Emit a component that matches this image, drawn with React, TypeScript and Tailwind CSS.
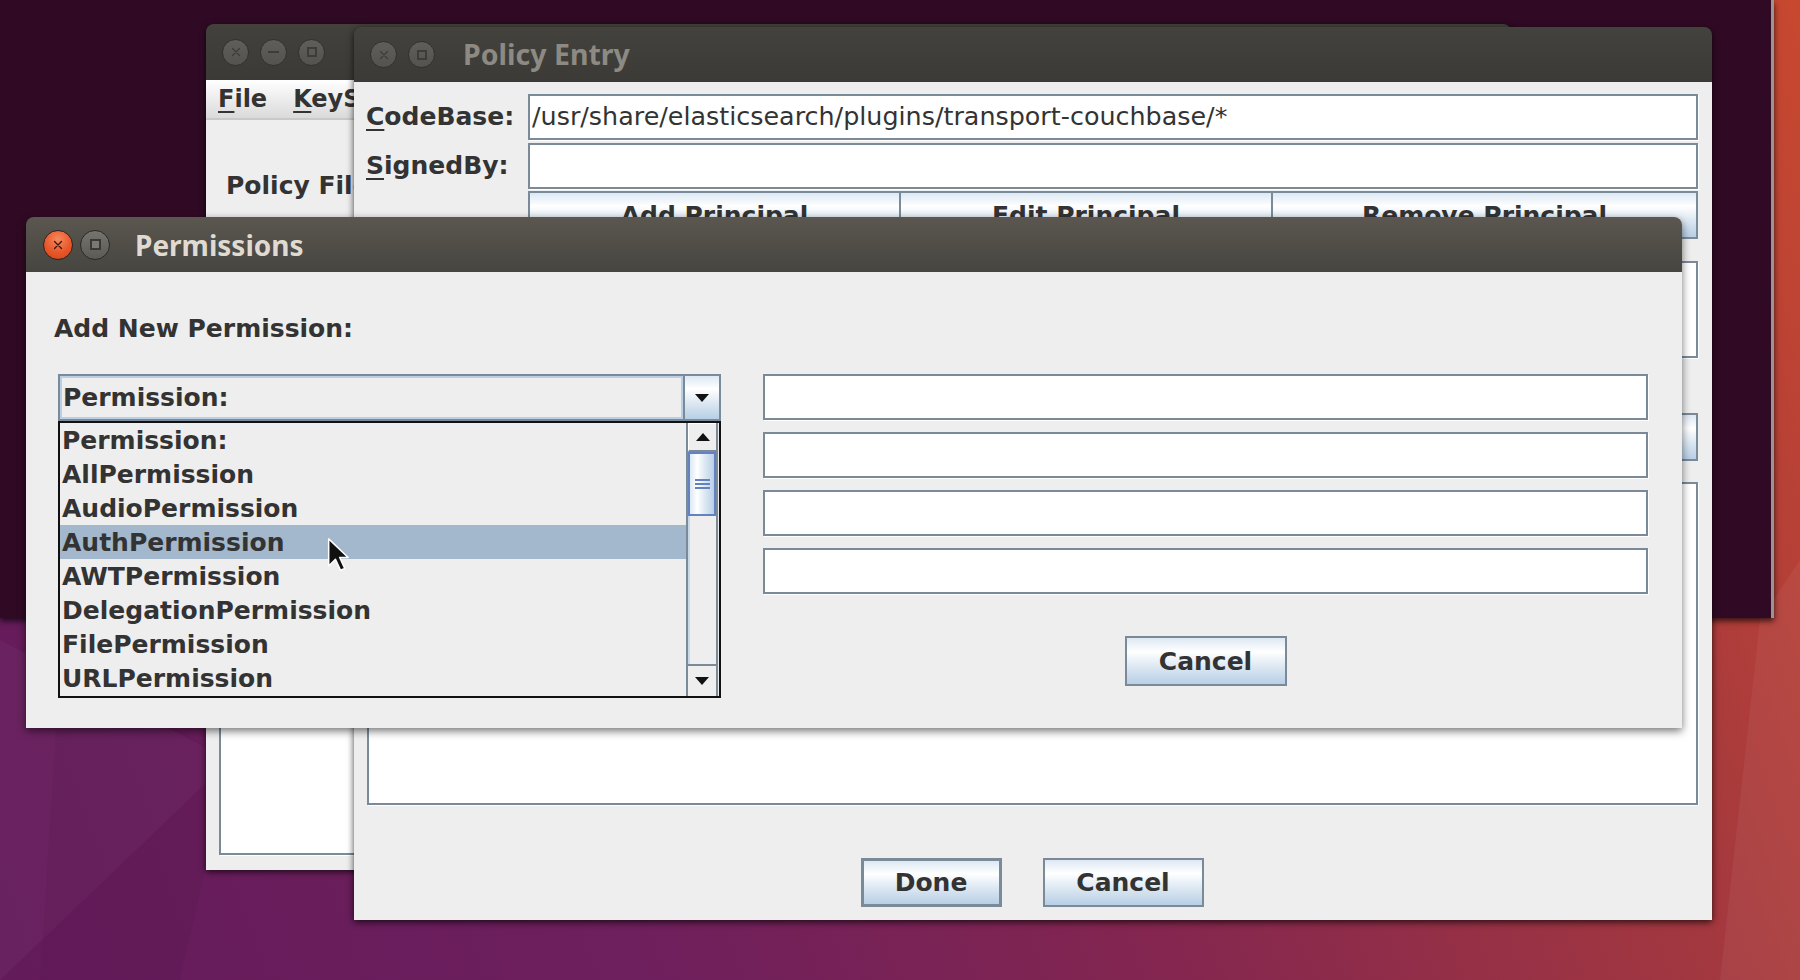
import React from "react";

const JF = "font-['DejaVu_Sans',sans-serif]";
const TF = "font-['Noto_Sans',sans-serif]";

function XIcon({ color }: { color: string }) {
  return (
    <svg width="10" height="10" viewBox="0 0 10 10">
      <path d="M1.5 1.5 L8.5 8.5 M8.5 1.5 L1.5 8.5" stroke={color} strokeWidth="1.3" strokeLinecap="round" />
    </svg>
  );
}

function WinBtn({ kind, focused, big }: { kind: "close" | "min" | "max"; focused?: boolean; big?: boolean }) {
  const size = big ? "w-[30px] h-[30px]" : "w-[27px] h-[27px]";
  if (focused && kind === "close") {
    return (
      <div className={`${size} rounded-full border border-[#2e231d] bg-[radial-gradient(circle_at_50%_30%,#f58a5f_0%,#e8572a_55%,#cf461b_100%)] flex items-center justify-center`}>
        <XIcon color="#3a1608" />
      </div>
    );
  }
  if (focused && kind === "max") {
    return (
      <div className={`${size} rounded-full border border-[#2a2926] bg-[linear-gradient(180deg,#76746e,#5c5a55)] flex items-center justify-center`}>
        <div className="w-[11px] h-[11px] border-2 border-[#3a3935] bg-[#7b7974]" />
      </div>
    );
  }
  return (
    <div className={`${size} rounded-full border border-[#32312d] bg-[linear-gradient(180deg,#605e59,#55534f)] flex items-center justify-center`}>
      {kind === "close" && <XIcon color="#3d3c38" />}
      {kind === "min" && <div className="w-[11px] h-[2px] bg-[#3d3c38]" />}
      {kind === "max" && <div className="w-[10px] h-[10px] border-2 border-[#3d3c38]" />}
    </div>
  );
}

function Field({ className = "", children }: { className?: string; children?: React.ReactNode }) {
  return (
    <div className={`bg-white border-2 border-[#7a8a99] shadow-[1px_1px_0_#ffffff] flex items-center ${className}`}>
      {children}
    </div>
  );
}

function MBtn({ children, className = "" }: { children?: React.ReactNode; className?: string }) {
  return (
    <div
      className={`flex items-center justify-center border-[#7a8a99] bg-[linear-gradient(180deg,#dde8f3_0%,#ffffff_30%,#dde8f3_62%,#b8cfe5_100%)] text-[25px] font-bold text-[#333333] leading-none whitespace-nowrap ${JF} ${className}`}
    >
      {children}
    </div>
  );
}

function U({ children }: { children: React.ReactNode }) {
  return <span className="underline decoration-2 underline-offset-[4px]">{children}</span>;
}

function Tri({ up }: { up?: boolean }) {
  return (
    <svg width="14" height="8" viewBox="0 0 14 8">
      <path d={up ? "M0 8 L7 0 L14 8 Z" : "M0 0 L14 0 L7 8 Z"} fill="#111" />
    </svg>
  );
}

const items = [
  "Permission:",
  "AllPermission",
  "AudioPermission",
  "AuthPermission",
  "AWTPermission",
  "DelegationPermission",
  "FilePermission",
  "URLPermission",
];

export default function App() {
  return (
    <div className="relative w-[1800px] h-[980px] overflow-hidden bg-[linear-gradient(70deg,#641b5a_0%,#6e1f5d_30%,#84264f_55%,#a3383f_80%,#c8482f_100%)]">
      {/* subtle facets */}
      <svg className="absolute left-0 top-0" width="1800" height="980">
        <polygon points="0,640 230,760 0,980" fill="#ffffff" opacity="0.03" />
        <polygon points="60,660 230,760 180,980 40,980" fill="#000000" opacity="0.03" />
        <polygon points="1760,620 1800,560 1800,980 1720,980" fill="#ffffff" opacity="0.05" />
      </svg>

      {/* dark terminal behind */}
      <div className="absolute left-0 top-0 w-[1774px] h-[618px] bg-[#300a24] border-r-[3px] border-[#9a9494] shadow-[0_3px_6px_rgba(0,0,0,0.7)]" />

      {/* Back window: Policy Tool */}
      <div className="absolute left-[206px] top-[24px] w-[1305px] h-[846px] rounded-t-[8px] flex flex-col shadow-[0_2px_6px_rgba(0,0,0,0.7)]">
        <div className="h-[56px] rounded-t-[8px] bg-[linear-gradient(180deg,#42413c,#3b3a36)] flex items-center pl-[16px] gap-[11px]">
          <WinBtn kind="close" />
          <WinBtn kind="min" />
          <WinBtn kind="max" />
        </div>
        <div className="h-[40px] bg-[linear-gradient(180deg,#ffffff,#dadada)] border-b-2 border-[#c9c9c9] flex">
          <div className={`w-[148px] overflow-hidden flex items-center pl-[12px] gap-[26px] text-[24px] font-bold text-[#333333] whitespace-nowrap ${JF}`}>
            <span><U>F</U>ile</span>
            <span><U>K</U>eyStore</span>
          </div>
        </div>
        <div className="flex-1 bg-[#eeeeee] flex flex-col pb-[15px]">
          <div className={`w-[148px] overflow-hidden whitespace-nowrap h-[30px] mt-[51px] pl-[20px] flex items-center text-[25px] font-bold text-[#333333] ${JF}`}>Policy File:</div>
          <div className="mt-auto ml-[13px] w-[1270px] h-[520px] bg-white border-2 border-[#7a8a99] shadow-[1px_1px_0_#ffffff]" />
        </div>
      </div>

      {/* Policy Entry window */}
      <div className="absolute left-[354px] top-[27px] w-[1358px] h-[893px] rounded-t-[8px] flex flex-col shadow-[0_2px_7px_rgba(0,0,0,0.75)]">
        <div className="h-[55px] rounded-t-[8px] bg-[linear-gradient(180deg,#43423d,#3b3a36)] flex items-center pl-[16px] gap-[11px]">
          <WinBtn kind="close" />
          <WinBtn kind="max" />
          <span className={`ml-[17px] text-[28.5px] font-bold text-[#8d8a83] ${TF}`}>Policy Entry</span>
        </div>
        <div className={`flex-1 bg-[#eeeeee] flex flex-col pl-[12px] pr-[14px] pt-[12px] text-[#333333] ${JF}`}>
          <div className="h-[46px] flex items-center">
            <div className="w-[162px] text-[25px] font-bold"><U>C</U>odeBase:</div>
            <Field className="flex-1 h-full pl-[2px]">
              <span className="text-[25.4px] text-[#333333] leading-none">/usr/share/elasticsearch/plugins/transport-couchbase/*</span>
            </Field>
          </div>
          <div className="h-[46px] mt-[3px] flex items-center">
            <div className="w-[162px] text-[25px] font-bold"><U>S</U>ignedBy:</div>
            <Field className="flex-1 h-full" />
          </div>
          <div className="h-[48px] mt-[2px] ml-[162px] flex">
            <MBtn className="w-[373px] border-2">Add Principal</MBtn>
            <MBtn className="w-[372px] border-2 border-l-0">Edit Principal</MBtn>
            <MBtn className="flex-1 border-2 border-l-0">Remove Principal</MBtn>
          </div>
          <div className="h-[97px] mt-[22px] flex">
            <div className="w-[162px] text-[25px] font-bold pt-[4px]">Principals:</div>
            <Field className="flex-1 h-full" />
          </div>
          <div className="h-[48px] mt-[55px] flex">
            <MBtn className="w-[436px] border-2">Add Permission</MBtn>
            <MBtn className="w-[436px] border-2 border-l-0">Edit Permission</MBtn>
            <MBtn className="flex-1 border-2 border-l-0">Remove Permission</MBtn>
          </div>
          <Field className="h-[323px] mt-[21px] ml-[1px]" />
          <div className="mt-[53px] flex justify-center gap-[41px]">
            <MBtn className="w-[141px] h-[49px] border-[3px]">Done</MBtn>
            <MBtn className="w-[161px] h-[49px] border-2">Cancel</MBtn>
          </div>
        </div>
      </div>

      {/* Permissions dialog */}
      <div className="absolute left-[26px] top-[217px] w-[1656px] h-[511px] rounded-t-[8px] flex flex-col shadow-[0_3px_9px_rgba(0,0,0,0.55)]">
        <div className="h-[55px] rounded-t-[8px] bg-[linear-gradient(180deg,#5b5750,#46453f)] flex items-center pl-[17px] gap-[7px]">
          <WinBtn kind="close" focused big />
          <WinBtn kind="max" focused big />
          <span className={`ml-[18px] text-[28px] font-bold text-[#dfdbd2] ${TF}`}>Permissions</span>
        </div>
        <div className={`flex-1 bg-[#eeeeee] flex flex-col pl-[28px] pt-[42px] text-[#333333] ${JF}`}>
          <div className="h-[30px] flex items-center text-[25px] font-bold">Add New Permission:</div>
          <div className="flex mt-[30px] ml-[4px] gap-[42px]">
            {/* left column: combo + popup */}
            <div className="w-[663px] flex flex-col">
              <div className="h-[47px] border-2 border-[#7a8a99] flex">
                <div className="flex-1 border-2 border-[#b8cfe5] bg-[#eeeeee] flex items-center pl-[1px] text-[25px] font-bold leading-none">
                  Permission:
                </div>
                <div className="w-[36px] border-l-2 border-[#7a8a99] bg-[linear-gradient(180deg,#dde8f3_0%,#ffffff_30%,#dde8f3_62%,#b8cfe5_100%)] flex items-center justify-center">
                  <Tri />
                </div>
              </div>
              <div className="h-[277px] border-2 border-[#111111] bg-[#eeeeee] flex">
                <div className="flex-1 flex flex-col">
                  {items.map((t, i) => (
                    <div
                      key={t}
                      className={`h-[34px] shrink-0 flex items-center pl-[2px] text-[25px] font-bold leading-none ${i === 3 ? "bg-[#a3b8cc]" : ""}`}
                    >
                      {t}
                    </div>
                  ))}
                </div>
                {/* scrollbar */}
                <div className="w-[32px] border-l-2 border-r-2 border-[#7a8a99] flex flex-col mr-[1px]">
                  <div className="h-[29px] bg-[#eeeeee] border-t border-l border-white border-b-2 border-b-[#7a8a99] flex items-center justify-center">
                    <Tri up />
                  </div>
                  <div className="h-[64px] border-2 border-[#6382bf] bg-[linear-gradient(90deg,#dde8f3_0%,#ffffff_30%,#dde8f3_62%,#b8cfe5_100%)] flex flex-col items-center justify-center gap-[2px]">
                    <div className="w-[15px] h-[2px] bg-[#6382bf]" />
                    <div className="w-[15px] h-[2px] bg-[#6382bf]" />
                    <div className="w-[15px] h-[2px] bg-[#6382bf]" />
                  </div>
                  <div className="flex-1 bg-[#eeeeee] border-l-2 border-[#c8d8ea]" />
                  <div className="h-[32px] bg-[#eeeeee] border-t-2 border-[#7a8a99] flex items-center justify-center">
                    <Tri />
                  </div>
                </div>
              </div>
            </div>
            {/* right column */}
            <div className="w-[885px] flex flex-col">
              <Field className="h-[46px]" />
              <Field className="h-[46px] mt-[12px]" />
              <Field className="h-[46px] mt-[12px]" />
              <Field className="h-[46px] mt-[12px]" />
              <MBtn className="self-center mt-[42px] w-[162px] h-[50px] border-2">Cancel</MBtn>
            </div>
          </div>
        </div>
      </div>

      {/* mouse cursor */}
      <svg className="absolute left-[327px] top-[537px]" width="22" height="36" viewBox="0 0 13 21">
        <path d="M1 1 L1 17 L5 13 L8 19.5 L10.5 18.5 L7.5 12 L12.5 12 Z" fill="#111" stroke="#fff" strokeWidth="0.9" strokeLinejoin="round" />
      </svg>
    </div>
  );
}
